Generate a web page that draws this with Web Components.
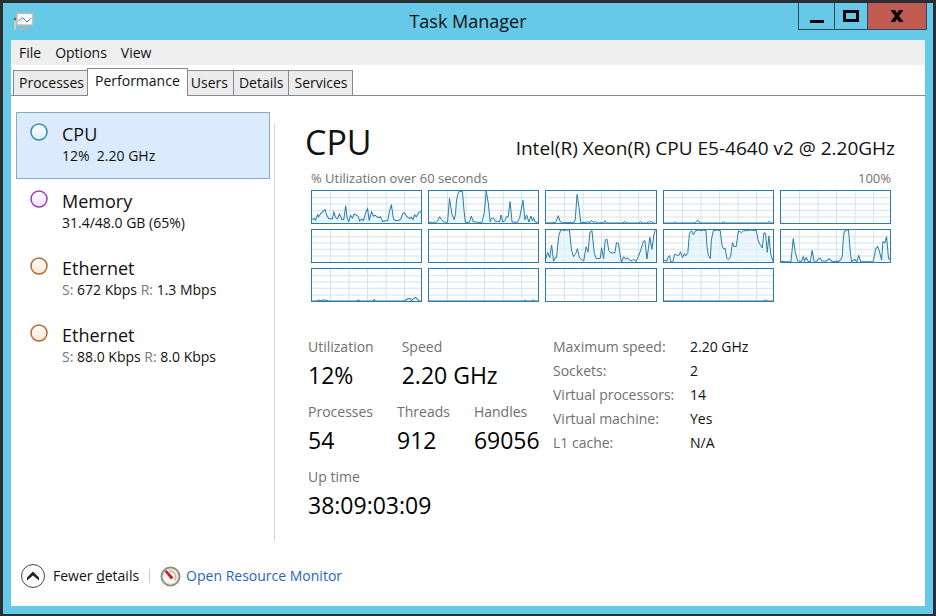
<!DOCTYPE html>
<html lang="en">
<head>
<meta charset="utf-8">
<title>Task Manager</title>
<style>
  html, body {
    height: 100%;
    margin: 0;
  }

  body {
    font: 14px/20px "Open Sans", "Noto Sans", sans-serif;
    color: #111;
    background: #2c2d33;
  }

  nav-item span {
    color: #777;
  }
</style>
</head>
<body>
<task-window caption="Task Manager">
  <menu-bar slot="menu" items="File,Options,View"></menu-bar>
  <tab-strip slot="tabs" items="Processes,Performance,Users,Details,Services" selected="Performance"></tab-strip>

  <nav-list slot="side">
    <nav-item label="CPU" color="#3c87b5" fill="#dceefa" selected>12%&nbsp; 2.20 GHz</nav-item>
    <nav-item label="Memory" color="#9a3fb8" fill="#f3e0fa">31.4/48.0 GB (65%)</nav-item>
    <nav-item label="Ethernet" color="#b06a35" fill="#fde6d2"><span>S:</span> 672 Kbps <span>R:</span> 1.3 Mbps</nav-item>
    <nav-item label="Ethernet" color="#b06a35" fill="#fde6d2"><span>S:</span> 88.0 Kbps <span>R:</span> 8.0 Kbps</nav-item>
  </nav-list>

  <cpu-panel model="Intel(R) Xeon(R) CPU E5-4640 v2 @ 2.20GHz"></cpu-panel>

  <window-footer slot="footer"></window-footer>
</task-window>

<script>
function render(el, html) {
  el.attachShadow({mode: 'open'});
  el.shadowRoot.innerHTML = html;
}

class TaskWindow extends HTMLElement {
  connectedCallback() {
    render(this, `
      <style>
        :host {
          display: flex;
          flex-direction: column;
          box-sizing: border-box;
          min-height: 100%;
          border: 3px solid #2c2d33;
          border-bottom-width: 2px;
          padding: 0 8px 8px;
          background: #67c9e8;
        }

        header {
          display: grid;
          grid-template-columns: 1fr auto 1fr;
          height: 37px;
        }

        .icon {
          margin: 9px 0 0 2px;
        }

        h1 {
          margin: 0;
          font-size: 18px;
          line-height: 36px;
          font-weight: 400;
        }

        .controls {
          display: flex;
          justify-self: end;
          height: 27px;
          margin-right: -2px;
          box-sizing: border-box;
          border: 1px solid #2b4c58;
          border-top: 0;
        }

        .controls button {
          display: grid;
          place-items: center;
          width: 36px;
          padding: 0;
          border: 0;
          border-right: 1px solid #2b4c58;
          background: none;
        }

        .controls button:nth-child(2) {
          width: 33px;
        }

        .controls .close {
          width: 58px;
          border: 0;
          background: #c15a51;
        }

        .client {
          flex: 1;
          display: flex;
          flex-direction: column;
          background: #fff;
        }

        main {
          flex: 1;
          display: flex;
          padding: 16px 0 5px 5px;
        }

        aside {
          width: 254px;
        }

        section {
          flex: 1;
          min-width: 0;
          margin-top: 12px;
          margin-left: 4px;
          border-left: 1px solid #d5d5d5;
          padding: 0 30px;
        }
      </style>
      <header>
        <svg class="icon" width="21" height="20" viewBox="0 0 21 20" aria-hidden="true">
          <path d="M2 7v11" stroke="#d2cdb9" stroke-width="2"/>
          <circle cx="2" cy="7" r="1.500" fill="#3d8a4d"/>
          <path d="M10 13h3v3h3v1.500H7V16h3z" fill="#b0b3ad"/>
          <rect x="4" y="1.500" width="15.500" height="11.500" fill="#fff" stroke="#c4beb4" stroke-width="1.500"/>
          <path d="M5.500 9l4-3.500L14 10l4-4" fill="none" stroke="#3b7aa5"/>
        </svg>
        <h1>${this.getAttribute('caption')}</h1>
        <div class="controls">
          <button type="button" aria-label="Minimize"><svg width="16" height="14"><path d="M1 12.500h14" stroke="#000" stroke-width="3"/></svg></button>
          <button type="button" aria-label="Maximize"><svg width="16" height="14"><rect x="1.500" y="2.500" width="13" height="9" fill="none" stroke="#000" stroke-width="3"/></svg></button>
          <button type="button" class="close" aria-label="Close"><svg width="14" height="14"><path d="M1 1h4l2 3 2-3h4v1l-4 5 4 5v1H9l-2-3-2 3H1v-1l4-5-4-5z"/></svg></button>
        </div>
      </header>
      <div class="client">
        <slot name="menu"></slot>
        <slot name="tabs"></slot>
        <main>
          <aside><slot name="side"></slot></aside>
          <section><slot></slot></section>
        </main>
        <slot name="footer"></slot>
      </div>
    `);
  }
}

class MenuBar extends HTMLElement {
  connectedCallback() {
    let items = this.getAttribute('items').split(',');
    render(this, `
      <style>
        :host {
          display: flex;
          gap: 14px;
          height: 25px;
          padding: 0 8px;
          background: #efefef;
        }

        button {
          padding: 0;
          border: 0;
          font: inherit;
          line-height: 26px;
          color: inherit;
          background: none;
        }
      </style>
      ${items.map(item => `<button type="button">${item}</button>`).join('')}
    `);
  }
}

class TabStrip extends HTMLElement {
  connectedCallback() {
    let items = this.getAttribute('items').split(',');
    let selected = this.getAttribute('selected');
    render(this, `
      <style>
        :host {
          display: block;
          padding: 3px 2px 0;
          border-bottom: 1px solid #858a92;
        }

        div {
          display: flex;
          align-items: flex-end;
        }

        button {
          height: 25px;
          margin-left: -1px;
          padding: 0 5px;
          border: 1px solid #858a92;
          border-bottom: 0;
          font: inherit;
          color: inherit;
          background: #ececec;
        }

        button:first-child {
          margin-left: 0;
        }

        button[aria-selected=true] {
          position: relative;
          height: 28px;
          margin: 0 -2px -1px -3px;
          padding: 0 7px 3px;
          background: #fff;
        }
      </style>
      <div role="tablist">
        ${items.map(item => `<button type="button" role="tab" aria-selected="${item === selected}">${item}</button>`).join('')}
      </div>
    `);
  }
}

class NavList extends HTMLElement {
  connectedCallback() {
    render(this, `
      <style>
        :host {
          display: flex;
          flex-direction: column;
        }
      </style>
      <slot></slot>
    `);
  }
}

class NavItem extends HTMLElement {
  connectedCallback() {
    let color = this.getAttribute('color');
    let fill = this.getAttribute('fill');
    render(this, `
      <style>
        :host {
          display: block;
        }

        button {
          display: flex;
          gap: 13px;
          width: 100%;
          height: 67px;
          padding: 9px 12px;
          border: 1px solid transparent;
          font: inherit;
          color: inherit;
          text-align: left;
          background: none;
        }

        :host([selected]) button {
          border-color: #88a9d2;
          background: #dbeafd;
        }

        svg {
          flex: none;
        }

        .label {
          display: block;
          font-size: 18px;
          line-height: 24px;
        }

        .detail {
          display: block;
          line-height: 20px;
          white-space: nowrap;
        }
      </style>
      <button type="button">
        <svg width="20" height="20" aria-hidden="true">
          <defs>
            <linearGradient id="g" x2="0" y2="1">
              <stop stop-color="#fff"/>
              <stop offset="1" stop-color="${fill}"/>
            </linearGradient>
          </defs>
          <circle cx="10" cy="10" r="8" fill="url(#g)" stroke="${color}" stroke-width="1.500"/>
        </svg>
        <span>
          <span class="label">${this.getAttribute('label')}</span>
          <span class="detail"><slot></slot></span>
        </span>
      </button>
    `);
  }
}

// load history per logical processor, drawn in a 330 x 96 box
const HISTORY = [
  '0,85 7,83 11,87 17,71 20,77 27,67 39,56 45,73 51,83 62,83 66,63 72,80 77,83 83,69 91,86 96,85 102,44 106,80 111,91 117,73 122,81 128,69 137,74 140,77 144,90 150,84 156,88 162,65 168,53 173,89 180,62 186,75 191,73 200,80 207,77 213,91 223,89 229,88 234,61 240,41 246,84 253,89 263,88 269,83 274,68 279,65 287,77 296,83 300,78 305,86 310,72 315,77 320,70 324,63 330,62',
  '0,95 5,93 10,95 15,93 20,95 26,90 32,77 38,86 46,93 56,94 62,22 69,68 76,86 80,70 83,30 87,10 91,1 101,1 106,60 110,94 122,94 128,75 134,93 140,92 146,94 160,94 167,65 173,0 179,35 185,93 188,83 195,81 202,92 208,90 213,93 218,72 223,93 230,88 234,77 239,78 245,32 251,93 267,94 274,80 284,28 290,86 295,72 302,93 308,75 313,90 316,80 321,93 330,94',
  '0,96 28,95 32,88 37,74 43,92 50,95 84,95 88,88 91,50 94,10 100,50 105,94 122,94 128,92 133,95 138,88 143,94 150,92 156,96 173,95 178,89 183,96 232,96 238,92 245,96 280,96 286,92 290,96 305,96 309,92 313,95 318,90 323,96 330,96',
  '0,96 28,96 33,92 38,96 94,96 99,91 103,88 109,96 175,96 180,92 184,96 312,96 318,91 323,96 330,96',
  '',
  '',
  '',
  '0,85 5,66 11,84 17,45 23,94 28,82 32,83 38,20 44,0 50,0 55,2 60,0 71,0 77,60 83,80 90,70 95,56 101,83 108,89 114,93 121,50 127,66 133,6 139,2 146,70 152,86 164,85 168,53 174,87 179,30 184,27 190,62 196,69 208,68 213,38 219,40 223,68 228,96 235,80 241,88 246,83 253,91 260,92 265,87 272,95 279,80 285,64 290,48 294,34 299,32 305,87 314,22 320,58 326,15 330,0',
  '0,92 5,90 8,94 13,80 17,77 20,95 27,95 32,73 38,75 45,76 50,65 56,83 62,70 65,78 72,68 77,10 83,2 89,15 95,2 106,0 112,2 120,0 127,2 130,50 134,76 140,86 143,30 149,2 160,0 170,2 175,45 180,57 185,55 190,85 195,89 201,80 207,38 211,49 218,50 225,2 234,8 240,2 250,2 260,0 279,2 285,33 291,45 297,54 302,8 307,10 312,67 317,18 323,75 330,95',
  '0,95 5,93 10,95 30,95 34,55 37,25 43,65 50,92 60,95 63,90 67,80 71,93 76,83 83,95 89,93 94,60 100,93 108,94 112,88 118,84 124,93 137,93 145,86 153,93 163,95 167,93 172,95 180,90 185,80 188,30 191,5 197,0 204,0 209,60 213,95 222,88 229,95 235,77 241,95 278,95 283,75 286,57 292,50 297,62 304,90 308,35 314,38 319,20 325,85 330,90',
  '0,96 15,96 20,93 25,96 32,93 45,94 50,96 135,96 140,93 145,96 185,96 188,91 192,96 280,96 288,90 296,88 300,95 308,88 313,85 319,90 322,95 330,96',
  '0,96 285,96 290,93 296,96 308,96 315,93 322,96 330,96',
  '',
  '0,96 300,96 308,93 314,96 330,96'
];

class LoadChart extends HTMLElement {
  connectedCallback() {
    let points = this.getAttribute('points');
    render(this, `
      <style>
        :host {
          display: block;
          height: 32px;
          border: 1px solid #2a7da6;
          background: #fff;
        }

        svg {
          display: block;
          width: 100%;
          height: 100%;
        }

        path, polyline {
          fill: none;
          vector-effect: non-scaling-stroke;
        }

        path {
          stroke: #d0e4ef;
        }

        polyline {
          stroke: #2a7da6;
        }

        polygon {
          fill: #e3f2fa;
          fill-opacity: .7;
        }
      </style>
      <svg viewBox="0 0 330 96" preserveAspectRatio="none" aria-hidden="true">
        <path d="M56 0v96M112 0v96M168 0v96M224 0v96M280 0v96M0 20h330M0 39h330M0 58h330M0 78h330"/>
        ${points ? `<polygon points="0,96 ${points} 330,96"/><polyline points="${points}"/>` : ''}
      </svg>
    `);
  }
}

class StatValue extends HTMLElement {
  connectedCallback() {
    render(this, `
      <style>
        :host {
          display: block;
          white-space: nowrap;
        }

        .label {
          color: #707070;
        }

        .value {
          font-size: 23px;
          line-height: 37px;
          color: #000;
        }
      </style>
      <div class="label">${this.getAttribute('label')}</div>
      <div class="value"><slot></slot></div>
    `);
  }
}

class CpuPanel extends HTMLElement {
  connectedCallback() {
    render(this, `
      <style>
        :host {
          display: block;
        }

        header {
          display: flex;
          justify-content: space-between;
          align-items: baseline;
        }

        h2 {
          margin: 0;
          font-size: 34px;
          line-height: 36px;
          font-weight: 400;
        }

        .model {
          font-size: 19px;
        }

        .scale {
          display: flex;
          justify-content: space-between;
          margin-top: 8px;
          padding: 0 4px 2px 6px;
          font-size: 13px;
          color: #707070;
        }

        .charts {
          display: grid;
          grid-template-columns: repeat(5, 1fr);
          gap: 5px 6px;
          padding: 0 4px 0 6px;
        }

        .stats {
          display: flex;
          gap: 15px;
          margin: 35px 0 0 3px;
        }

        .figures {
          display: flex;
          flex-direction: column;
          gap: 8px;
          width: 230px;
        }

        .row {
          display: flex;
          gap: 24px;
        }

        .row.wide {
          gap: 28px;
        }

        dl {
          display: grid;
          grid-template-columns: 137px auto;
          grid-auto-rows: 24px;
          align-content: start;
          margin: 0;
          white-space: nowrap;
        }

        dt {
          color: #707070;
        }

        dd {
          margin: 0;
        }
      </style>
      <header>
        <h2>CPU</h2>
        <span class="model">${this.getAttribute('model')}</span>
      </header>
      <div class="scale"><span>% Utilization over 60 seconds</span><span>100%</span></div>
      <div class="charts">
        ${HISTORY.map(points => `<load-chart points="${points}"></load-chart>`).join('')}
      </div>
      <div class="stats">
        <div class="figures">
          <div class="row wide">
            <stat-value label="Utilization">12%</stat-value>
            <stat-value label="Speed">2.20 GHz</stat-value>
          </div>
          <div class="row">
            <stat-value label="Processes">54</stat-value>
            <stat-value label="Threads">912</stat-value>
            <stat-value label="Handles">69056</stat-value>
          </div>
          <stat-value label="Up time">38:09:03:09</stat-value>
        </div>
        <dl>
          <dt>Maximum speed:</dt><dd>2.20 GHz</dd>
          <dt>Sockets:</dt><dd>2</dd>
          <dt>Virtual processors:</dt><dd>14</dd>
          <dt>Virtual machine:</dt><dd>Yes</dd>
          <dt>L1 cache:</dt><dd>N/A</dd>
        </dl>
      </div>
    `);
  }
}

class WindowFooter extends HTMLElement {
  connectedCallback() {
    render(this, `
      <style>
        :host {
          display: flex;
          align-items: center;
          gap: 10px;
          height: 60px;
          padding: 0 10px;
        }

        button, a {
          display: flex;
          align-items: center;
          padding: 0;
          border: 0;
          font: inherit;
          color: inherit;
          text-decoration: none;
          background: none;
        }

        button {
          gap: 8px;
        }

        a {
          gap: 5px;
          color: #1f66c1;
        }

        hr {
          width: 1px;
          height: 14px;
          margin: 0;
          border: 0;
          background: #ccc;
        }
      </style>
      <button type="button">
        <svg width="24" height="24" aria-hidden="true">
          <circle cx="12" cy="12" r="11.500" fill="#fff" stroke="#444"/>
          <path d="M6 13.500l6-6 6 6v3l-6-5-6 5z" fill="#222"/>
        </svg>
        <span>Fewer <u>d</u>etails</span>
      </button>
      <hr>
      <a href="#">
        <svg width="21" height="21" aria-hidden="true">
          <circle cx="10.500" cy="10.500" r="9" fill="#f8f6f1" stroke="#8d8d86" stroke-width="2"/>
          <circle cx="10.500" cy="10.500" r="7.500" fill="none" stroke="#d9d8d2"/>
          <path d="M9 5a6 6 0 0 1 5.500 9.500" fill="none" stroke="#c9b795" stroke-width="1.500"/>
          <path d="M4.500 5.500L6.500 4l7 7.500-2.500 2z" fill="#c5212b"/>
        </svg>
        <span>Open Resource Monitor</span>
      </a>
    `);
  }
}

customElements.define('task-window', TaskWindow);
customElements.define('menu-bar', MenuBar);
customElements.define('tab-strip', TabStrip);
customElements.define('nav-list', NavList);
customElements.define('nav-item', NavItem);
customElements.define('load-chart', LoadChart);
customElements.define('stat-value', StatValue);
customElements.define('cpu-panel', CpuPanel);
customElements.define('window-footer', WindowFooter);
</script>
</body>
</html>
